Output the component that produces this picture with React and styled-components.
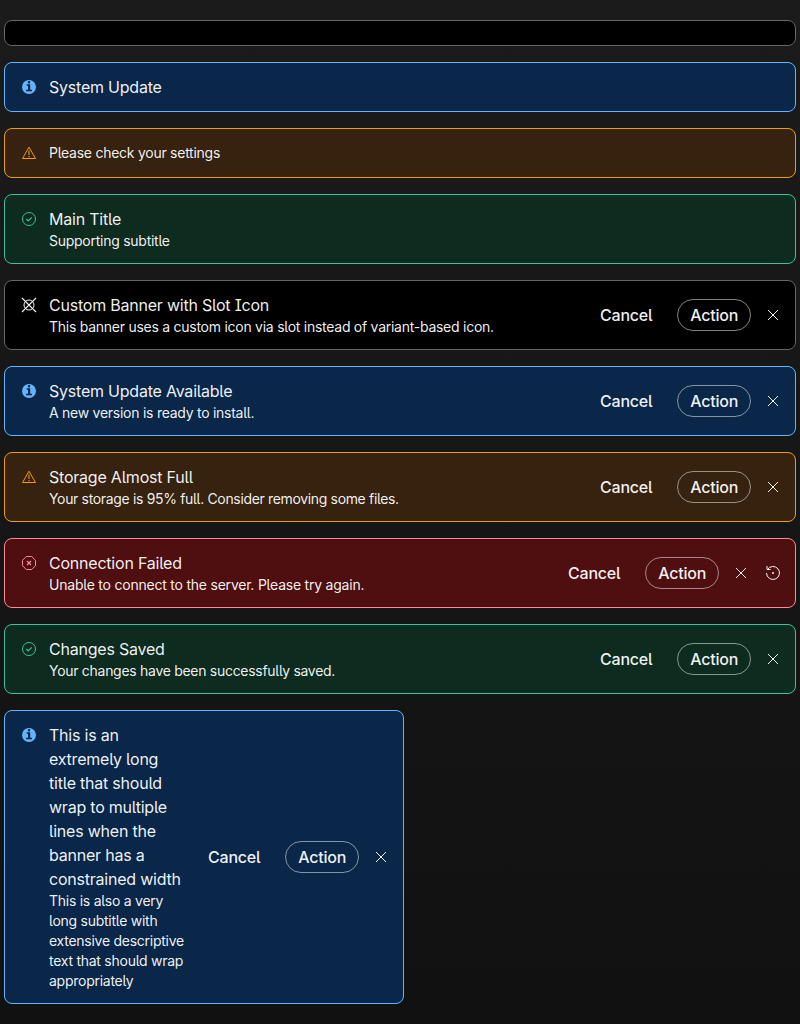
import React from "react";
import styled, { createGlobalStyle } from "styled-components";

const Global = createGlobalStyle`
  html { min-height: 100%; background: linear-gradient(180deg, #1b1b1b 0%, #111111 100%); }
  body {
    margin: 0;
    font-family: Inter, "Liberation Sans", sans-serif;
    font-feature-settings: "ss02";
    color: rgba(255, 255, 255, 0.95);
  }
  #root { padding: 20px 4px; }
`;

const variants = {
  neutral: { bg: "#000000", line: "#666666", icon: "#f2f2f2" },
  info: { bg: "#0a274a", line: "#64b4fa", icon: "#64b4fa" },
  warning: { bg: "#36220e", line: "#f29b0c", icon: "#f29b0c" },
  error: { bg: "#4f0e10", line: "#fc8b98", icon: "#fc8b98" },
  success: { bg: "#0e2b20", line: "#3cc29a", icon: "#3cc29a" },
};

const Stack = styled.main`
  display: flex;
  flex-direction: column;
  gap: 16px;
`;

const Panel = styled.section`
  box-sizing: border-box;
  display: flex;
  align-items: center;
  width: ${(p) => (p.$width ? p.$width + "px" : "100%")};
  min-height: 26px;
  padding: 12px 6px 12px 16px;
  border: 1px solid ${(p) => variants[p.$variant].line};
  border-radius: 8px;
  background: ${(p) => variants[p.$variant].bg};
`;

const IconSlot = styled.span`
  align-self: flex-start;
  display: flex;
  align-items: center;
  flex: none;
  height: 24px;
  margin-right: 12px;
  color: ${(p) => variants[p.$variant].icon};
`;

const Copy = styled.div`
  flex: 1;
  min-width: 0;
`;

const Title = styled.div`
  font-size: 16px;
  line-height: 24px;
  letter-spacing: -0.22px;
`;

const Subtitle = styled.div`
  font-size: 14px;
  line-height: ${(p) => (p.$alone ? 24 : 20)}px;
  letter-spacing: ${(p) => p.$tracking}px;
`;

const Actions = styled.div`
  display: flex;
  align-items: center;
  flex: none;
  margin-left: 8px;
`;

const Button = styled.button`
  box-sizing: border-box;
  height: 32px;
  padding: 0 12px;
  margin-right: ${(p) => (p.$outlined ? 6 : 12)}px;
  border: 1px solid ${(p) => (p.$outlined ? "rgba(255,255,255,.5)" : "transparent")};
  border-radius: 16px;
  background: transparent;
  color: inherit;
  font-family: inherit;
  font-size: 16px;
  font-weight: 500;
  line-height: 24px;
  letter-spacing: -0.25px;
  font-feature-settings: inherit;
`;

const IconButton = styled.button`
  display: flex;
  align-items: center;
  justify-content: center;
  width: 32px;
  height: 32px;
  padding: 0;
  border: 0;
  background: transparent;
  color: inherit;
`;

const Svg = ({ children }) => (
  <svg width="16" height="16" viewBox="0 0 16 16" fill="none" stroke="currentColor">
    {children}
  </svg>
);

const icons = {
  info: (
    <Svg>
      <path
        fill="currentColor"
        stroke="none"
        fillRule="evenodd"
        d="M8 1a7 7 0 1 0 0 14A7 7 0 0 0 8 1ZM8 2a1.2 1.2 0 1 1 0 2.4A1.2 1.2 0 0 1 8 2ZM5.7 5.3h3.5v5.4h1.8v1.5H5v-1.5h2V6.8H5.7Z"
      />
    </Svg>
  ),
  warning: (
    <Svg>
      <path d="M8 2.2 14.5 13.5h-13Z" strokeLinejoin="round" />
      <path d="M8 5.5v4.5M8 11v1.2" strokeWidth="1.1" />
    </Svg>
  ),
  success: (
    <Svg>
      <circle cx="8" cy="8" r="6.5" />
      <path d="m5.3 8 1.9 1.8 3.5-3.5" strokeWidth="1.2" />
    </Svg>
  ),
  error: (
    <Svg>
      <path d="M5.3 1.5h5.4l3.8 3.8v5.4l-3.8 3.8H5.3l-3.8-3.8V5.3Z" strokeLinejoin="round" />
      <path d="m6 6 4 4m0-4-4 4" strokeWidth="1.2" />
    </Svg>
  ),
  neutral: (
    <Svg>
      <circle cx="8" cy="8" r="5" />
      <path d="m1 1 14 14M15 1 1 15" strokeWidth="1.1" />
    </Svg>
  ),
};

const Close = () => (
  <Svg>
    <path d="m3 3 10 10m0-10L3 13" />
  </Svg>
);

const Restart = () => (
  <Svg>
    <path d="M2.5 4.5A6.5 6.5 0 1 1 1.5 8M2 1v3.5h3.5" />
    <circle cx="8" cy="8" r="1" fill="currentColor" stroke="none" />
  </Svg>
);

const Banner = ({ variant, title, subtitle, actions, restart, width, tracking = -0.26 }) => (
  <Panel $variant={variant} $width={width}>
    {(title || subtitle) && (
      <>
        <IconSlot $variant={variant}>{icons[variant]}</IconSlot>
        <Copy>
          {title && <Title>{title}</Title>}
          {subtitle && <Subtitle $alone={!title} $tracking={tracking}>{subtitle}</Subtitle>}
        </Copy>
      </>
    )}
    {actions && (
      <Actions>
        <Button>Cancel</Button>
        <Button $outlined>Action</Button>
        <IconButton aria-label="Close"><Close /></IconButton>
        {restart && <IconButton aria-label="Retry"><Restart /></IconButton>}
      </Actions>
    )}
  </Panel>
);

export default function App() {
  return (
    <>
      <Global />
      <Stack>
        <Banner variant="neutral" />
        <Banner variant="info" title="System Update" />
        <Banner variant="warning" subtitle="Please check your settings" />
        <Banner variant="success" title="Main Title" subtitle="Supporting subtitle" />
        <Banner variant="neutral" title="Custom Banner with Slot Icon" subtitle="This banner uses a custom icon via slot instead of variant-based icon." actions />
        <Banner variant="info" title="System Update Available" subtitle="A new version is ready to install." actions />
        <Banner variant="warning" title="Storage Almost Full" subtitle="Your storage is 95% full. Consider removing some files." tracking={-0.34} actions />
        <Banner variant="error" title="Connection Failed" subtitle="Unable to connect to the server. Please try again." tracking={-0.22} actions restart />
        <Banner variant="success" title="Changes Saved" subtitle="Your changes have been successfully saved." tracking={-0.29} actions />
        <Banner
          variant="info"
          width={400}
          title="This is an extremely long title that should wrap to multiple lines when the banner has a constrained width"
          subtitle="This is also a very long subtitle with extensive descriptive text that should wrap appropriately"
          actions
        />
      </Stack>
    </>
  );
}
